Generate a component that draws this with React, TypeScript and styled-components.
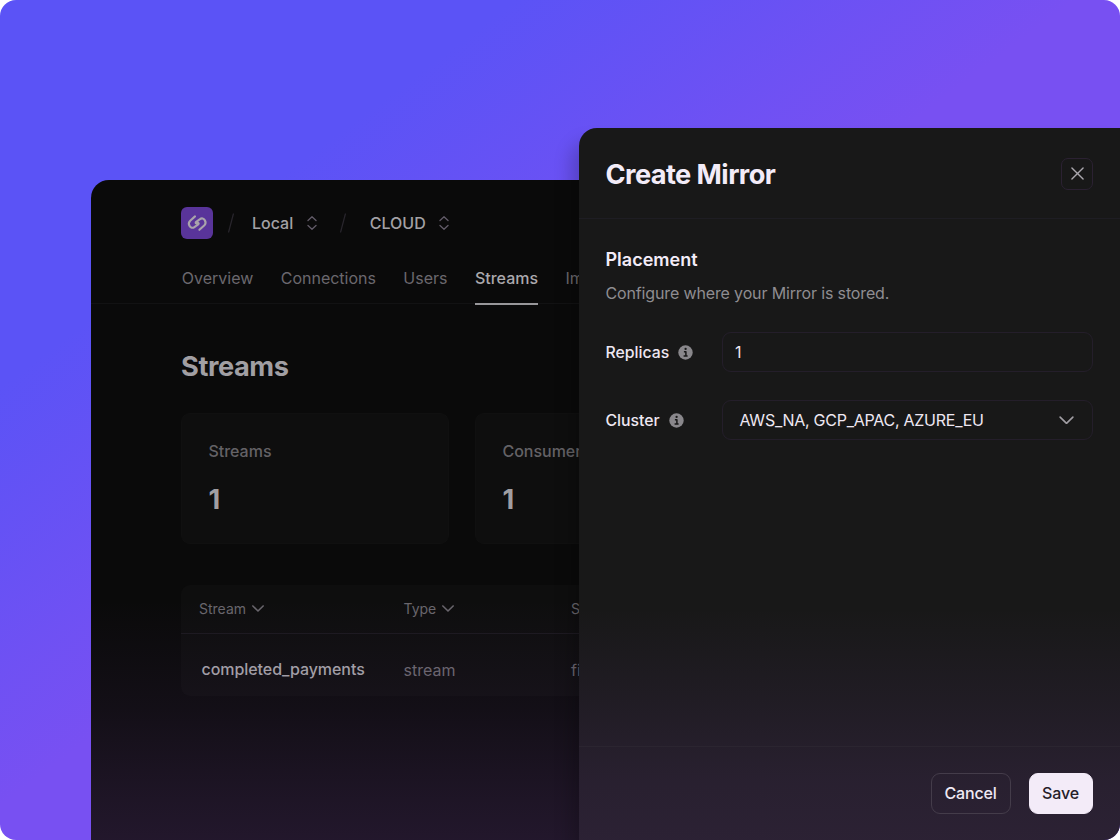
import React from 'react';
import styled, { createGlobalStyle, css } from 'styled-components';

const GlobalStyle = createGlobalStyle`
  *, *::before, *::after { box-sizing: border-box; }
  body { margin: 0; background: #fff; font-family: Inter, sans-serif; -webkit-font-smoothing: antialiased; }
  h1, h2, h3, p { margin: 0; }
  button, input { font-family: inherit; }
`;

const Scene = styled.div`
  position: relative;
  width: 1120px;
  height: 840px;
  overflow: hidden;
  border-radius: 16px;
  background: linear-gradient(to bottom right, #5b53f6 23%, #7850f2 48%);
`;

/* Dashboard window */

const Dashboard = styled.main`
  position: absolute;
  left: 91px;
  top: 180px;
  width: 700px;
  height: 660px;
  padding-top: 27px;
  overflow: hidden;
  border-radius: 18px 0 0 0;
  background: #0a0a0a;

  &::after {
    content: '';
    position: absolute;
    inset: 420px 0 0 0;
    background: linear-gradient(rgba(140, 80, 190, 0), rgba(140, 80, 190, 0.07) 45%, rgba(140, 80, 190, 0.15) 80%, rgba(140, 80, 190, 0.19));
    pointer-events: none;
  }
`;

const Breadcrumbs = styled.div`
  display: flex;
  align-items: center;
  height: 32px;
  padding-left: 90px;
`;

const LogoTile = styled.div`
  display: flex;
  width: 32px;
  height: 32px;
  border-radius: 6px;
  background: #59349a;
`;

const Divider = styled.svg<{ $before: number; $after: number }>`
  display: block;
  width: 8px;
  height: 22px;
  margin-left: ${(p) => p.$before}px;
  margin-right: ${(p) => p.$after}px;
  stroke: #29262d;
`;

const Crumb = styled.div`
  display: flex;
  align-items: center;
  gap: 13.5px;
  color: #a3a1a5;
  font-size: 16px;
  font-weight: 500;
  line-height: 32px;
`;

const Tabs = styled.nav`
  display: flex;
  gap: 27.4px;
  height: 65px;
  padding: 24px 0 0 90.8px;
  border-bottom: 1px solid #121213;
`;

const Tab = styled.a<{ $active?: boolean }>`
  flex: none;
  height: 42px;
  padding-top: 5px;
  color: #6b686e;
  font-size: 16px;
  line-height: 21px;
  ${(p) =>
    p.$active &&
    css`
      color: #aba9ad;
      font-weight: 500;
      border-bottom: 2px solid #98979a;
    `}
`;

const Content = styled.section`
  padding: 47px 0 0 90px;
`;

const PageTitle = styled.h1`
  color: #a19fa3;
  font-size: 27.2px;
  font-weight: 700;
  line-height: 32px;
  letter-spacing: -0.42px;
`;

const Cards = styled.div`
  display: flex;
  gap: 26.5px;
  margin-top: 30px;
`;

const Card = styled.article`
  flex: none;
  width: 267.5px;
  height: 131px;
  padding: 27px 26.4px;
  border: 1px solid #101010;
  border-radius: 9px;
  background: #0e0e0e;
`;

const CardLabel = styled.h3`
  color: #646266;
  font-size: 16px;
  font-weight: 500;
  line-height: 20px;
`;

const CardValue = styled.p`
  margin-top: 23px;
  color: #a09ea2;
  font-size: 27.2px;
  font-weight: 700;
  line-height: 32px;
`;

const Table = styled.div`
  width: 560px;
  margin-top: 41px;
  border-radius: 9px;
  background: #0e0e0e;
`;

const TableRow = styled.div<{ $head?: boolean }>`
  display: grid;
  grid-template-columns: 222.5px 167.5px 1fr;
  align-items: center;
  height: ${(p) => (p.$head ? 49 : 62)}px;
  color: #69666c;
  font-size: ${(p) => (p.$head ? 14 : 16)}px;
  border-bottom: ${(p) => (p.$head ? '1px solid #1b191e' : 'none')};
`;

const HeadCell = styled.div<{ $indent?: number }>`
  display: flex;
  align-items: center;
  gap: 6px;
  padding: 0 0 1px ${(p) => p.$indent ?? 0}px;
`;

const Cell = styled.div`
  padding-top: 10px;
  line-height: 22px;
`;

const NameCell = styled(Cell)`
  padding: 8px 0 0 20.5px;
  color: #a3a1a5;
  font-weight: 500;
  letter-spacing: -0.06px;
`;

/* Drawer */

const Drawer = styled.aside`
  position: absolute;
  left: 579px;
  top: 128px;
  display: flex;
  flex-direction: column;
  width: 541px;
  height: 712px;
  border-radius: 18px 0 0 0;
  background:
    linear-gradient(rgba(140, 80, 190, 0) 480px, rgba(140, 80, 190, 0.07) 570px, rgba(140, 80, 190, 0.14) 650px, rgba(140, 80, 190, 0.17)),
    #181818;
  box-shadow: -8px 14px 18px rgba(0, 0, 0, 0.2);
`;

const DrawerHeader = styled.header`
  display: flex;
  align-items: center;
  justify-content: space-between;
  height: 91px;
  padding: 1px 27px 0 26.5px;
  border-bottom: 1px solid #1e1d23;
`;

const DrawerTitle = styled.h2`
  padding-top: 3px;
  color: #f3ecf8;
  font-size: 27.2px;
  font-weight: 700;
  line-height: 32px;
  letter-spacing: -0.57px;
`;

const CloseButton = styled.button`
  display: flex;
  align-items: center;
  justify-content: center;
  width: 32px;
  height: 32px;
  padding: 0;
  border: 1px solid #2b2132;
  border-radius: 7px;
  background: transparent;
`;

const DrawerBody = styled.div`
  flex: 1;
  padding: 29px 27px 0 26.5px;
`;

const SectionTitle = styled.h3`
  color: #f3ecf8;
  font-size: 18px;
  font-weight: 600;
  line-height: 24px;
`;

const SectionText = styled.p`
  margin-top: 9px;
  color: #8f8d91;
  font-size: 16px;
  line-height: 24px;
  letter-spacing: -0.14px;
`;

const Field = styled.div<{ $top: number }>`
  display: flex;
  align-items: center;
  margin-top: ${(p) => p.$top}px;
`;

const FieldLabel = styled.label`
  display: flex;
  align-items: center;
  gap: 9px;
  width: 116.5px;
  color: #eee7f2;
  font-size: 15.8px;
  font-weight: 500;
`;

const controlBox = css`
  width: 371px;
  height: 40px;
  border: 1px solid #241e2a;
  border-radius: 9px;
  background: transparent;
  color: #eee7f2;
  font-size: 16px;
`;

const TextInput = styled.input`
  ${controlBox}
  padding: 0 12px;
`;

const Select = styled.button`
  ${controlBox}
  display: flex;
  align-items: center;
  justify-content: space-between;
  padding: 0 18.5px 0 16.5px;
  letter-spacing: -0.26px;
`;

const DrawerFooter = styled.footer`
  display: flex;
  justify-content: flex-end;
  gap: 18px;
  height: 94px;
  padding: 26px 27px 0 0;
  border-top: 1px solid #2b2530;
`;

const Button = styled.button<{ $primary?: boolean }>`
  width: ${(p) => (p.$primary ? 64 : 80)}px;
  height: 41px;
  padding: 0 1px 2px 0;
  border: 1px solid ${(p) => (p.$primary ? '#f3ebf8' : '#443c4a')};
  border-radius: 9px;
  background: ${(p) => (p.$primary ? '#f3ebf8' : 'transparent')};
  color: ${(p) => (p.$primary ? '#252029' : '#f0e9f4')};
  font-size: 16px;
  font-weight: 500;
  letter-spacing: -0.15px;
`;

const Icon = styled.svg`
  display: block;
  flex: none;
  fill: none;
  stroke-linecap: round;
  stroke-linejoin: round;
`;

const Logo = () => (
  <Icon width="32" height="32" viewBox="0 0 32 32" stroke="#a9a3ab" strokeWidth="2.1">
    <path d="M14 9.4 9.2 13.7C5.9 16.8 9.7 22.9 13.4 20.1L17.2 17.4Q18.2 16.5 17.2 15.9L15.2 16.3Q14.2 15.7 15.2 14.8L19 12.1C22.7 9.3 26.5 15.4 23.2 18.5L18.4 22.8" />
  </Icon>
);

const Sorter = () => (
  <Icon width="10" height="14" viewBox="0 0 10 14" stroke="#625b68" strokeWidth="1.3">
    <path d="M1 4.5 5 .8l4 3.7M1 9.5l4 3.7 4-3.7" />
  </Icon>
);

const Chevron = ({ width, color, stroke = 1.5 }: { width: number; color: string; stroke?: number }) => (
  <Icon width={width} height={width / 2 + 1} viewBox="0 0 14 8" stroke={color} strokeWidth={stroke}>
    <path d="M1 1l6 6 6-6" />
  </Icon>
);

const Slash = ({ before, after }: { before: number; after: number }) => (
  <Divider viewBox="0 0 8 22" $before={before} $after={after}>
    <path d="M6.5 1.5 1.5 20.5" strokeWidth="1.2" />
  </Divider>
);

const Info = () => (
  <Icon width="15" height="15" viewBox="0 0 15 15">
    <circle cx="7.5" cy="7.5" r="7.2" fill="#89878b" />
    <circle cx="7.6" cy="3.9" r="1.15" fill="#181818" />
    <path d="M5.9 6.7h2v4.1M5.6 11h4" stroke="#181818" strokeWidth="1.5" strokeLinecap="butt" />
  </Icon>
);

const tabs = ['Overview', 'Connections', 'Users', 'Streams', 'Import'];
const stats = [
  { label: 'Streams', value: 1 },
  { label: 'Consumers', value: 1 },
];

export default function App() {
  return (
    <>
      <GlobalStyle />
      <Scene>
        <Dashboard>
          <Breadcrumbs>
            <LogoTile>
              <Logo />
            </LogoTile>
            <Slash before={13.5} after={17.5} />
            <Crumb>
              Local <Sorter />
            </Crumb>
            <Slash before={22.5} after={22.5} />
            <Crumb>
              CLOUD <Sorter />
            </Crumb>
          </Breadcrumbs>
          <Tabs>
            {tabs.map((tab) => (
              <Tab key={tab} $active={tab === 'Streams'}>
                {tab}
              </Tab>
            ))}
          </Tabs>
          <Content>
            <PageTitle>Streams</PageTitle>
            <Cards>
              {stats.map((stat) => (
                <Card key={stat.label}>
                  <CardLabel>{stat.label}</CardLabel>
                  <CardValue>{stat.value}</CardValue>
                </Card>
              ))}
            </Cards>
            <Table>
              <TableRow $head>
                <HeadCell $indent={18}>
                  Stream <Chevron width={12} color="#69666c" stroke={1.8} />
                </HeadCell>
                <HeadCell>
                  Type <Chevron width={12} color="#69666c" stroke={1.8} />
                </HeadCell>
                <HeadCell>Storage</HeadCell>
              </TableRow>
              <TableRow>
                <NameCell>completed_payments</NameCell>
                <Cell>stream</Cell>
                <Cell>file</Cell>
              </TableRow>
            </Table>
          </Content>
        </Dashboard>

        <Drawer>
          <DrawerHeader>
            <DrawerTitle>Create Mirror</DrawerTitle>
            <CloseButton aria-label="Close">
              <Icon width="13" height="13" viewBox="0 0 14 14" stroke="#aaa7ad" strokeWidth="1.5">
                <path d="M1 1l12 12M13 1 1 13" />
              </Icon>
            </CloseButton>
          </DrawerHeader>
          <DrawerBody>
            <SectionTitle>Placement</SectionTitle>
            <SectionText>Configure where your Mirror is stored.</SectionText>
            <Field $top={27}>
              <FieldLabel>
                Replicas <Info />
              </FieldLabel>
              <TextInput defaultValue="1" aria-label="Replicas" />
            </Field>
            <Field $top={28}>
              <FieldLabel>
                Cluster <Info />
              </FieldLabel>
              <Select>
                AWS_NA, GCP_APAC, AZURE_EU
                <Chevron width={15} color="#a19ea4" />
              </Select>
            </Field>
          </DrawerBody>
          <DrawerFooter>
            <Button>Cancel</Button>
            <Button $primary>Save</Button>
          </DrawerFooter>
        </Drawer>
      </Scene>
    </>
  );
}
